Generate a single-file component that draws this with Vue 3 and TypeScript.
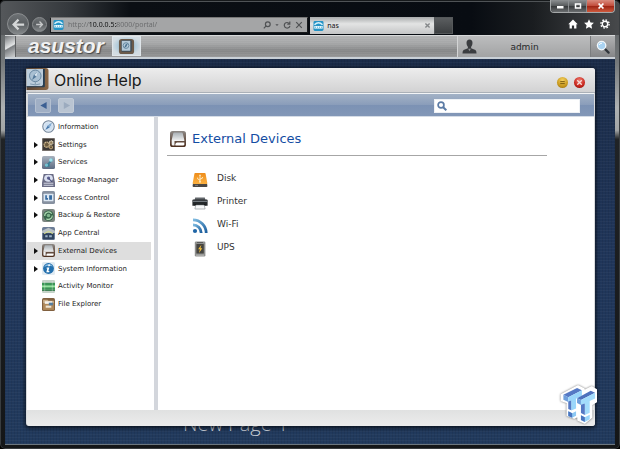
<script setup lang="ts">
import { ref } from 'vue'

interface Topic {
  label: string
  icon: string
  branch: boolean
}

const topics: Topic[] = [
  { label: 'Information', icon: 'compass', branch: false },
  { label: 'Settings', icon: 'settings', branch: true },
  { label: 'Services', icon: 'services', branch: true },
  { label: 'Storage Manager', icon: 'storage', branch: true },
  { label: 'Access Control', icon: 'access', branch: true },
  { label: 'Backup & Restore', icon: 'backup', branch: true },
  { label: 'App Central', icon: 'apps', branch: false },
  { label: 'External Devices', icon: 'external', branch: true },
  { label: 'System Information', icon: 'sysinfo', branch: true },
  { label: 'Activity Monitor', icon: 'activity', branch: false },
  { label: 'File Explorer', icon: 'files', branch: false },
]

const devices = [
  { label: 'Disk', icon: 'disk' },
  { label: 'Printer', icon: 'printer' },
  { label: 'Wi-Fi', icon: 'wifi' },
  { label: 'UPS', icon: 'ups' },
]

const selected = ref('External Devices')
const address = ref('http://10.0.0.5:8000/portal/')
const query = ref('')
</script>

<template>
  <div class="browser">
    <svg class="sprite" aria-hidden="true">
      <defs>
        <linearGradient id="g-tile" x1="0" y1="0" x2="0" y2="1">
          <stop offset="0" stop-color="#a9b2be" /><stop offset="1" stop-color="#5c6b82" />
        </linearGradient>
        <linearGradient id="g-brown" x1="0" y1="0" x2="0" y2="1">
          <stop offset="0" stop-color="#8d8986" /><stop offset=".5" stop-color="#6d5a4f" /><stop offset="1" stop-color="#4c2e1d" />
        </linearGradient>
        <linearGradient id="g-silver" x1="0" y1="0" x2="0" y2="1">
          <stop offset="0" stop-color="#a9b0b5" /><stop offset="1" stop-color="#e9ebec" />
        </linearGradient>
        <linearGradient id="g-orange" x1="0" y1="0" x2="0" y2="1">
          <stop offset="0" stop-color="#ee8d1b" /><stop offset="1" stop-color="#fbb040" />
        </linearGradient>
        <linearGradient id="g-wood" x1="0" y1="0" x2="1" y2="0">
          <stop offset="0" stop-color="#5a4433" /><stop offset="1" stop-color="#8a6746" />
        </linearGradient>
        <linearGradient id="g-wifi" x1="0" y1="0" x2="1" y2="1">
          <stop offset="0" stop-color="#7fbbe0" /><stop offset="1" stop-color="#1d5f9e" />
        </linearGradient>
      </defs>
      <symbol id="compass" viewBox="0 0 12 12">
        <circle cx="6" cy="6" r="5.3" fill="#e4edf6" stroke="#75879b" stroke-width="1" />
        <circle cx="6" cy="6" r="4" fill="#cfe0f1" />
        <path d="M9 2.8 6.9 6.9 3 9.2 5.2 5.2z" fill="#4577aa" /><path d="M9 2.8 5.2 5.2 6.9 6.9z" fill="#8bb0d4" />
      </symbol>
      <symbol id="settings" viewBox="0 0 12 12">
        <rect width="12" height="12" rx="1.5" fill="#3b3734" />
        <rect x=".5" y=".5" width="11" height="11" rx="1" fill="none" stroke="#77716c" />
        <circle cx="4.4" cy="6.2" r="2.4" fill="#6b5a3e" stroke="#cdb78d" stroke-width="1.3" stroke-dasharray="1.3 .5" />
        <circle cx="8.5" cy="4.3" r="1.6" fill="#8f7c58" stroke="#eadfc4" stroke-width="1.1" stroke-dasharray=".9 .4" />
        <circle cx="8.3" cy="8.6" r="1.4" fill="#5b4a30" stroke="#b59d72" stroke-width="1" />
      </symbol>
      <symbol id="services" viewBox="0 0 12 12">
        <rect width="12" height="12" rx="1.5" fill="url(#g-tile)" />
        <path d="M2.5 9.5 6 6l3-4 1.5 2L7 7v3H3z" fill="#387f96" />
        <circle cx="8.3" cy="3.7" r="1.7" fill="#9fe0ea" /><circle cx="4.1" cy="8.4" r="1.5" fill="#75c1d0" />
      </symbol>
      <symbol id="storage" viewBox="0 0 12 12">
        <path d="M1.5 0h9l1.5 8v4H0V8z" fill="#6b6d86" />
        <ellipse cx="6" cy="4" rx="4" ry="3.2" fill="#d9dff0" /><circle cx="6" cy="3.8" r="1.5" fill="#5d6191" />
        <path d="m6 4 3.2 3" stroke="#444b79" stroke-width="1" />
        <path d="M1.5 8.5h9M1.5 10.4h9" stroke="#d7d9e6" stroke-width=".9" />
      </symbol>
      <symbol id="access" viewBox="0 0 12 12">
        <rect width="12" height="12" rx="1.5" fill="#8791a0" />
        <rect x="1.5" y="2.5" width="9" height="7" rx=".6" fill="#dce7f2" />
        <path d="M3 4v4h2.5V6.4H4.5V4zM6.6 4h2.6v4H6.6z" fill="#356a9f" />
      </symbol>
      <symbol id="backup" viewBox="0 0 12 12">
        <rect width="12" height="12" rx="2" fill="#7b8580" />
        <circle cx="6" cy="6" r="4.8" fill="#37664a" />
        <path d="M2.5 6.4A3.5 3.5 0 0 1 9 4.4M9.5 6A3.5 3.5 0 0 1 4 8.9" fill="none" stroke="#a9d4ad" stroke-width="1.1" />
        <circle cx="6" cy="6" r="1.6" fill="#7fb58b" />
      </symbol>
      <symbol id="apps" viewBox="0 0 12 12">
        <rect width="12" height="12" rx="1.5" fill="#6c7d97" />
        <path d="M0 3.5 6 .8l6 2.7v2H0z" fill="#b9c1c6" /><path d="M1 5.8h10v5.4H1z" fill="#2f425e" />
        <path d="M2 6.2 6 4l4 2.2" stroke="#dbe27f" stroke-width=".9" fill="none" />
        <path d="M3 7.5h2.2v2H3zM6.6 7.5h2.5v2H6.6z" fill="#9cb4c9" />
      </symbol>
      <symbol id="external" viewBox="0 0 16 16">
        <rect width="16" height="16" rx="2.6" fill="url(#g-brown)" />
        <path d="M4.2 1.6h7.6q.8 0 1 .8L14.3 9H1.7l1.5-6.6q.2-.8 1-.8z" fill="url(#g-silver)" />
        <path d="M1.7 9h12.6v.9H4.5v4.7H3q-1.3 0-1.3-1.3z" fill="#f1f2f2" />
        <path d="M5.4 14.6v-1.4q.1-1.6 1.7-1.6h7.2v1.7q0 1.3-1.3 1.3z" fill="#fff" />
      </symbol>
      <symbol id="sysinfo" viewBox="0 0 12 12">
        <rect width="12" height="12" rx="1.5" fill="#e1ebf2" />
        <circle cx="6" cy="6" r="5" fill="#2370ae" /><path d="M2 4.5A4.4 4.4 0 0 1 10 4.2Q6 2.4 2 4.5z" fill="#88bce2" />
        <path d="M7.6 2.4 7 4H5.6l.5-1.6zM4.4 5h2.4L5.9 8.4h1L6.6 9.5H4L4.9 6h-.8z" fill="#fff" />
      </symbol>
      <symbol id="activity" viewBox="0 0 12 12">
        <rect width="12" height="12" rx="1.2" fill="#c4d2c8" />
        <path d="M0 2.6h12V9H0z" fill="#3b9556" /><path d="M0 5h12v1.8H0z" fill="#96e3a0" />
        <path d="M0 9h12v1H0z" fill="#277240" />
        <path d="M2.5 1v10M9.5 1v10" stroke="#eef5ef" stroke-width=".5" opacity=".6" />
      </symbol>
      <symbol id="files" viewBox="0 0 12 12">
        <rect width="12" height="12" rx="1.5" fill="#81603f" />
        <path d="M1 1.5h4l1 1h5V5H1z" fill="#cbb08a" /><path d="M2.6 3h6.8v3H2.6z" fill="#f6f3ec" />
        <path d="M1 5.4h10V11H1z" fill="#b08a5b" /><path d="M3.4 7h5.2v2H3.4z" fill="#eee5d3" />
        <path d="M6.3 4.3h3.8v2.5H6.3z" fill="#557d9d" />
      </symbol>
      <symbol id="disk" viewBox="0 0 16 16">
        <path d="M1 11h14l.4 3.1q0 .9-.9.9h-13q-.9 0-.9-.9z" fill="#4a4744" />
        <path d="M3.2 1h9.6q.6 0 .8.7l1.7 9.4q.1.8-.7.8H1.4q-.8 0-.7-.8L2.4 1.7Q2.6 1 3.2 1z" fill="url(#g-orange)" />
        <path d="M8 3.2v6.4M8 8.2 5.6 6.8V5.6M8 7.2l2.4-1V5" fill="none" stroke="#fff1cf" stroke-width=".9" />
        <path d="m8 2.2 1.1 1.6H6.9z" fill="#fff1cf" /><circle cx="8" cy="9.8" r=".9" fill="#fff1cf" />
        <path d="M3 13.4h3" stroke="#9a9794" stroke-width=".7" />
      </symbol>
      <symbol id="printer" viewBox="0 0 16 16">
        <path d="M3.2 2.4h9.6l.8 3H2.4z" fill="#62676b" /><path d="M1.4 4.6h13.2q1 0 1 1v5.2H.4V5.6q0-1 1-1z" fill="#24282b" />
        <path d="M.9 5.8h14.2v1.3H.9z" fill="#737a80" /><path d="M2.6 9.2h10.8v1.4H2.6z" fill="#0b0d0e" />
        <path d="M3.8 10h8.4l.9 4H2.9z" fill="#f7f8f9" stroke="#83898e" stroke-width=".6" />
      </symbol>
      <symbol id="wifi" viewBox="0 0 16 16">
        <g fill="none" stroke="url(#g-wifi)" stroke-width="2.8">
          <path d="M1 1.9A13.2 13.2 0 0 1 14.2 15" /><path d="M1 6.8A8.2 8.2 0 0 1 9.2 15" />
        </g>
        <circle cx="3" cy="13" r="2.1" fill="#1f65a6" />
      </symbol>
      <symbol id="ups" viewBox="0 0 16 16">
        <rect x="2.8" y=".6" width="10.6" height="14.8" rx="1.2" fill="#8f908e" />
        <rect x="4.4" y="3" width="7.4" height="9.6" rx=".6" fill="#45443f" />
        <path d="M5 1h6v1.1H5z" fill="#5b5c5b" /><path d="M9.4 3.7 6.1 8.3h1.8L7 12l3.3-4.7H8.5z" fill="#f4bf3a" />
        <path d="M4 14.2h8" stroke="#c7c8c6" stroke-width=".7" />
      </symbol>
      <symbol id="site" viewBox="0 0 10 10">
        <rect width="10" height="10" rx="1.4" fill="#2593c5" />
        <path d="M1 3.7Q5-.4 9 3.7" fill="none" stroke="#d5f1fb" stroke-width="1.5" />
        <path d="M.8 5h8.4v2.6H.8z" fill="#e9f8fd" /><path d="M2 5.6v1.4M4 5.6v1.4M6 5.6v1.4M8 5.6v1.4" stroke="#3fa1cb" stroke-width=".6" />
      </symbol>
      <symbol id="book" viewBox="0 0 24 24">
        <path d="M0 0h21q3 0 3 3v18q0 3-3 3H0z" fill="url(#g-wood)" />
        <path d="M0 1h18v17q0 2-2 2H0z" fill="#bccddb" /><path d="M18 1h2v19q0 1-1 1H0v-1h16q2 0 2-2z" fill="#253e54" />
        <circle cx="9.6" cy="8.6" r="6.3" fill="#a9c0d3" stroke="#63829d" stroke-width="1" />
        <path d="M13 3.8 10.8 9.6 6 13l2.2-5.8z" fill="#54799a" /><path d="M8.4 7.3 10.8 9.6 13 3.8z" fill="#d8e5ef" />
        <path d="M4 17.4q5.6 2 11 0M9.6 15v3" stroke="#7994aa" fill="none" />
      </symbol>
    </svg>

    <header class="chrome">
      <nav class="travel" aria-label="History">
        <button class="round back" aria-label="Back">
          <svg viewBox="0 0 16 16"><path d="M14 8H3M8 2.8 2.8 8 8 13.2" fill="none" stroke="#d5d7d8" stroke-width="2.4" /></svg>
        </button>
        <button class="round next" aria-label="Forward">
          <svg viewBox="0 0 16 16"><path d="M2 8h11M8 2.8 13.2 8 8 13.2" fill="none" stroke="#c6c8c9" stroke-width="2.4" /></svg>
        </button>
      </nav>
      <div class="address">
        <svg class="ico10"><use href="#site" /></svg>
        <input v-model="address" type="text" aria-label="Address" />
        <button aria-label="Search the web"><svg viewBox="0 0 10 10"><circle cx="6" cy="4" r="3" /><path d="M3.9 6.2 1 9.3" /></svg></button>
        <button class="tiny" aria-label="Show address list"><svg viewBox="0 0 10 10"><path class="solid" d="M1 3h8L5 7.5z" /></svg></button>
        <button aria-label="Refresh"><svg viewBox="0 0 10 10"><path d="M8 3.3A3.5 3.5 0 1 0 8.6 6M8.5.7v3.2H5.3" /></svg></button>
        <button aria-label="Stop"><svg viewBox="0 0 10 10"><path d="m1.5 1.5 7 7m0-7-7 7" /></svg></button>
      </div>
      <div class="tab">
        <svg class="ico10"><use href="#site" /></svg>
        <span>nas</span>
        <button aria-label="Close tab"><svg viewBox="0 0 10 10"><path d="m2 2 6 6m0-6-6 6" fill="none" stroke="#848789" stroke-width="2" /></svg></button>
      </div>
      <button class="newtab" aria-label="New tab"></button>
      <div class="right">
        <div class="window-buttons">
          <button aria-label="Minimize window"><svg viewBox="0 0 10 8"><path d="M2 4h6.5v2.5H2z" fill="#fff" /></svg></button>
          <button aria-label="Maximize window"><svg viewBox="0 0 10 8"><path d="M2.5 2h5v4h-5z" fill="none" stroke="#fff" stroke-width="1.5" /></svg></button>
          <button class="shut" aria-label="Close window"><svg viewBox="0 0 10 8"><path d="m2.6 1.5 4.8 5m0-5-4.8 5" stroke="#fff" stroke-width="1.8" /></svg></button>
        </div>
        <div class="tools">
          <button aria-label="Home"><svg viewBox="0 0 10 10"><path d="M5 .6.3 5.2h1.3v4.3h2.3V6.4h2.2v3.1h2.3V5.2h1.3z" fill="#fff" /></svg></button>
          <button aria-label="Favorites"><svg viewBox="0 0 10 10"><path d="m5 .2 1.5 3.2 3.4.4-2.5 2.4.7 3.5L5 8 1.9 9.7l.7-3.500L.1 3.8l3.400-.4z" fill="#fff" /></svg></button>
          <button aria-label="Tools"><svg viewBox="0 0 10 10"><circle cx="5" cy="5" r="2.7" fill="none" stroke="#fff" stroke-width="1.4" /><circle cx="5" cy="5" r="4.1" fill="none" stroke="#fff" stroke-width="1.4" stroke-dasharray="1.6 1.62" /></svg></button>
        </div>
      </div>
    </header>

    <div class="page">
      <header class="nasbar">
        <button class="desktop" aria-label="Show desktop"></button>
        <div class="logo">asustor</div>
        <button class="task" aria-label="Online Help window">
          <svg viewBox="0 0 18 18">
            <rect x="1" y="1" width="16" height="16" rx="3" fill="#6b5a4a" /><rect x="3.5" y="2.5" width="11" height="12" rx="1" fill="#3c4c58" />
            <rect x="4" y="3" width="9" height="10.5" fill="#b4c9d8" /><circle cx="8.5" cy="8" r="3" fill="none" stroke="#64879f" /><path d="M10.5 5.5 9 9l-2.5 1.5L8 7z" fill="#49718f" />
          </svg>
        </button>
        <button class="user">
          <svg viewBox="0 0 16 16"><path d="M8 .5q3.2 0 3.2 3.8 0 2.6-1.5 4.2v1.3l4.6 2q1.2.7 1.2 3.7H.5q0-3 1.2-3.7l4.6-2V8.5Q4.8 6.9 4.8 4.3 4.8.5 8 .5z" fill="#3b3d40" /><path d="M6.6 10.4 8 13l1.4-2.6" fill="#8f9294" /></svg>
          <span>admin</span>
        </button>
        <button class="find" aria-label="Search">
          <svg viewBox="0 0 14 14"><path d="m8.6 8.6 4 4" stroke="#30353b" stroke-width="2.2" stroke-linecap="round" /><circle cx="5.6" cy="5.6" r="4.2" fill="#a9d3f2" stroke="#f3f8fb" stroke-width="1.3" /><path d="M3.3 5A2.5 2.5 0 0 1 6 3.2" stroke="#fff" fill="none" /></svg>
        </button>
      </header>

      <div class="desk">
        <p class="page-name">New Page 1</p>
        <section class="dialog" aria-label="Online Help">
          <header class="title">
            <svg class="book"><use href="#book" /></svg>
            <h1>Online Help</h1>
            <button class="orb gold" aria-label="Minimize"><svg viewBox="0 0 10 10"><path d="M2.5 4h5M2.5 6.2h5" stroke="#735509" stroke-width="1" /></svg></button>
            <button class="orb red" aria-label="Close"><svg viewBox="0 0 10 10"><path d="m2.5 2.5 5 5m0-5-5 5" stroke="#f6dcd9" stroke-width="1.5" /></svg></button>
          </header>
          <div class="strip">
            <button class="step" aria-label="Previous topic"><svg viewBox="0 0 10 10"><path d="M8.5 1v8L1.5 5z" fill="#3b5f93" /></svg></button>
            <button class="step dim" aria-label="Next topic"><svg viewBox="0 0 10 10"><path d="M2 1v8l7-4z" fill="#9cabbf" /></svg></button>
            <label class="search">
              <svg viewBox="0 0 10 10"><circle cx="4" cy="4" r="2.9" fill="none" stroke="#5c7ba5" stroke-width="1.7" /><path d="M6.2 6.2 9.3 9.3" stroke="#5c7ba5" stroke-width="2" /></svg>
              <input v-model="query" type="search" aria-label="Search help" />
            </label>
          </div>
          <div class="body">
            <nav class="side" aria-label="Topics">
              <ul>
                <li v-for="t in topics" :key="t.label">
                  <button :class="{ on: selected === t.label }" @click="selected = t.label">
                    <svg class="arrow" viewBox="0 0 4 6"><path v-if="t.branch" d="M0 0v6l4-3z" fill="#111" /></svg>
                    <svg class="ico"><use :href="'#' + t.icon" /></svg>
                    <span>{{ t.label }}</span>
                  </button>
                </li>
              </ul>
            </nav>
            <main class="content">
              <h2><svg><use href="#external" /></svg>External Devices</h2>
              <ul class="devices">
                <li v-for="d in devices" :key="d.label">
                  <svg><use :href="'#' + d.icon" /></svg>
                  <a href="#" @click.prevent>{{ d.label }}</a>
                </li>
              </ul>
            </main>
          </div>
          <footer class="foot"></footer>
          <svg class="mark" viewBox="0 0 37 40" aria-hidden="true">
            <path d="M1 10 18 1l6 3v2l8-4 5 3v12l-5 3v13l-7 6-7-3v-4l-4 2-7-3V18l-6-2z" fill="#fff" stroke="#fff" stroke-width="1.5" stroke-linejoin="round" />
            <path d="M3 10 17 3l5 2.5-14 7z" fill="#5579c4" /><path d="m3 10 5 2.5v5L3 15z" fill="#6e9fdc" />
            <path d="m8 12.5 14-7V11l-6 3v10l-5 2.2V16l-3 1.5z" fill="#9ad6fa" />
            <path d="m8 17 3-1v10l-3-1.5z" fill="#5579c4" /><path d="m8 27 4 2 4-2v4.5l-4 2.2-4-2z" fill="#8dc9f4" /><path d="m8 27 4 2v4.7l-4-2z" fill="#4a75bf" />
            <path d="M17 13.5 31 6l4.500 2L21 15.500z" fill="#4e71bd" /><path d="m17 13.5 4 2v5l-4-2z" fill="#6e9fdc" />
            <path d="M21 15.5 35.500 8v5.800L30 16.500v12l-5 2.200V19l-4 1.500z" fill="#a3dcfc" />
            <path d="m21 20.3 4-1.300v11.700l-4-2z" fill="#5579c4" /><path d="m21 31 4 2 5-2.500V35l-5 3-4-2.200z" fill="#9ad6fa" /><path d="m21 31 4 2v5l-4-2.200z" fill="#4a75bf" />
          </svg>
        </section>
      </div>
    </div>
  </div>
</template>

<style>
body {
  margin: 0;
  background: #000;
}
</style>

<style scoped>
* {
  box-sizing: border-box;
}
button {
  padding: 0;
  border: 0;
  background: none;
  color: inherit;
  font: inherit;
}
svg {
  display: block;
  flex: none;
}
ul,
p,
h1,
h2 {
  margin: 0;
  padding: 0;
  list-style: none;
  font-weight: 400;
}
.sprite {
  position: absolute;
  width: 0;
  height: 0;
}
.browser {
  display: flex;
  flex-direction: column;
  height: 100vh;
  padding: 0 5px 4px;
  overflow: hidden;
  border-radius: 5px;
  background:
    linear-gradient(90deg, #55585b 0, #35393d 11%, #0b0f14 21%, #080c12 76%, #1a1d20 86%, #484a4c 100%) top / 100% 35px no-repeat,
    linear-gradient(180deg, #55585b 0, #75797b 14%, #aeb1b2 24%, #a2a5a6 29%, #202326 31%, #141618 100%);
  box-shadow: inset 0 1px 0 #16191b, inset 0 2px 0 #4f5356, inset 0 0 0 1px #383c3f;
  font-family: "DejaVu Sans", sans-serif;
}
.chrome {
  display: flex;
  flex: none;
  height: 35px;
}
.travel {
  display: flex;
  align-items: center;
  flex: none;
  gap: 3px;
  width: 45px;
  padding: 13px 0 0 2px;
}
.round {
  display: grid;
  place-items: center;
  flex: none;
  border: 1px solid #8b8e90;
  border-radius: 50%;
  background: linear-gradient(#6c7073, #5b5f62 50%, #85898b);
}
.back {
  width: 22px;
  height: 22px;
}
.back svg {
  width: 15px;
  height: 15px;
}
.next {
  width: 15px;
  height: 15px;
}
.next svg {
  width: 9px;
  height: 9px;
}
.address {
  display: flex;
  align-items: center;
  gap: 4px;
  flex: 255 0 0;
  height: 16px;
  margin-top: 17px;
  padding: 0 4px 0 2px;
  border: 1px solid #17191b;
  border-top-color: #777;
  background: #a4a5a6;
  color: #505254;
}
.ico10 {
  width: 11px;
  height: 10px;
}
.address input {
  flex: 1;
  min-width: 0;
  height: 12px;
  padding: 0;
  border: 0;
  outline: 0;
  background: linear-gradient(90deg, #68696b 21px, #101112 21px, #101112 49px, #68696b 49px);
  background-clip: text;
  -webkit-background-clip: text;
  color: transparent;
  font: 7px/12px "Noto Sans", sans-serif;
}
.address button {
  width: 8px;
}
.address .tiny {
  width: 4px;
}
.address button svg {
  width: 100%;
  fill: none;
  stroke: #505254;
  stroke-width: 1.5px;
}
.address .solid {
  fill: #505254;
  stroke: none;
}
.tab {
  display: flex;
  align-items: center;
  gap: 3px;
  flex: 120 0 0;
  height: 17px;
  margin: 17px 0 0 2px;
  padding: 0 3px;
  background: linear-gradient(#a9abac, #e3e4e4 40%, #c4c5c6);
  color: #111;
  font: 7px/12px "Noto Sans", sans-serif;
}
.tab span {
  flex: 1;
}
.tab button,
.tab button svg {
  width: 7px;
}
.newtab {
  width: 19px;
  height: 17px;
  margin-top: 17px;
  border: 1px solid #55585a;
  background: linear-gradient(#5b5e60, #3c3f41);
}
.right {
  display: flex;
  flex-direction: column;
  flex: 165 0 0;
  align-items: flex-end;
  gap: 6px;
}
.window-buttons {
  display: flex;
  height: 13px;
  overflow: hidden;
  border: 1px solid #a5a8a9;
  border-top: 0;
  border-radius: 0 0 4px 4px;
}
.window-buttons button {
  display: grid;
  place-items: center;
  width: 18px;
  border-right: 1px solid #8b8e90;
  background: linear-gradient(#8d9092, #55585a 50%, #37393b 51%, #6b6e70);
}
.window-buttons svg {
  width: 10px;
  height: 8px;
}
.window-buttons .shut {
  width: 27px;
  border: 0;
  background: linear-gradient(#d98b7d, #c14a38 50%, #9c2313 51%, #cf5a3d);
}
.tools {
  display: flex;
  gap: 6px;
  padding-right: 5px;
}
.tools button,
.tools svg {
  width: 10px;
  height: 10px;
}
.page {
  display: flex;
  flex: 1;
  flex-direction: column;
  min-height: 0;
  overflow: hidden;
  border: solid #6c767e;
  border-width: 0 0 1px;
}
.nasbar {
  display: flex;
  flex: none;
  height: 24px;
  border-top: 1px solid #d7d9da;
  border-bottom: 2px solid #c9d0d7;
  background: repeating-linear-gradient(0deg, #ffffff0d 0 1px, #0000 1px 2px), linear-gradient(#b1b2b3, #a5a6a7 35%, #858687 70%, #949596);
}
.desktop {
  width: 11px;
  border-right: 1px solid #5d5f61;
  background: linear-gradient(150deg, #74777a, #e2e4e5 50%, #7c7f82 55%, #cfd1d2);
}
.logo {
  padding: 0 8px 0 12px;
  color: #f1f2f3;
  font: italic 700 21px/19px "Liberation Sans", sans-serif;
  text-shadow: 1px 1px 1px #45484b;
}
.task {
  display: grid;
  place-items: center;
  width: 29px;
  height: 20px;
  border: 1px solid #dfe5e9;
  background: radial-gradient(#7cb1cf, #d3dce2 75%);
}
.task svg {
  width: 17px;
  height: 17px;
}
.user {
  display: flex;
  align-items: center;
  width: 133px;
  margin-left: auto;
  padding-left: 4px;
  border-left: 1px solid #d3d4d5;
  background: linear-gradient(#bcbdbe, #a2a3a4);
  color: #26282a;
  font: 9px/20px "DejaVu Sans", sans-serif;
}
.user svg {
  width: 15px;
  height: 15px;
}
.user span {
  flex: 1;
  padding-right: 18px;
  text-align: center;
}
.find {
  display: grid;
  place-items: center;
  width: 25px;
  border-left: 1px solid #7b7d7f;
  background: linear-gradient(#b1b2b3, #858688);
}
.find svg {
  width: 14px;
  height: 14px;
}
.desk {
  position: relative;
  display: flex;
  flex: 1;
  min-height: 0;
  padding: 9px 20px 18px 21px;
  background:
    repeating-linear-gradient(0deg, #ffffff08 0 1px, #0000 1px 3px),
    repeating-linear-gradient(90deg, #00000012 0 1px, #0000 1px 3px),
    linear-gradient(#1b2c49, #20365a 50%, #213a5d);
}
.page-name {
  position: absolute;
  bottom: 8px;
  left: 178px;
  color: #c9d0d9;
  font: 300 20px/24px "Open Sans", sans-serif;
}
.dialog {
  position: relative;
  display: flex;
  flex: 1;
  flex-direction: column;
  border-radius: 3px;
  background: #d9dbdd;
  box-shadow: 0 1px 4px 1px #000a;
}
.title {
  display: flex;
  align-items: center;
  flex: none;
  height: 25px;
  padding-right: 10px;
  border-bottom: 1px solid #aab0b7;
  border-radius: 3px 3px 0 0;
  background: linear-gradient(#ededed, #d2d2d3);
}
.book {
  align-self: flex-start;
  width: 23px;
  height: 22px;
}
.title h1 {
  flex: 1;
  padding-left: 5px;
  color: #1a1a1a;
  font: 16px/24px Inter, sans-serif;
}
.orb {
  display: grid;
  place-items: center;
  width: 11px;
  height: 11px;
  margin-top: 4px;
  border-radius: 50%;
}
.orb svg {
  width: 9px;
  height: 9px;
}
.gold {
  margin-right: 6px;
  background: radial-gradient(circle at 50% 30%, #f4d05f, #c99a1f 60%, #8d6611);
}
.red {
  background: radial-gradient(circle at 50% 30%, #ee7b70, #c8261d 60%, #7f120d);
}
.strip {
  display: flex;
  align-items: center;
  flex: none;
  gap: 7px;
  height: 24px;
  margin: 0 1px 0 2px;
  padding: 1px 14px 0 7px;
  border-top: 1px solid #f2f4f6;
  border-bottom: 1px solid #d5dce6;
  background: linear-gradient(#a3b2c6, #8a9dba 49%, #7c92b4 50%, #8297b7);
}
.step {
  display: grid;
  place-items: center;
  width: 16px;
  height: 15px;
  border: 1px solid #b4c0d1;
  border-radius: 2px;
  background: #a0afc5;
}
.step svg {
  width: 9px;
  height: 9px;
}
.dim {
  border-color: #c3ccd8;
  background: #b9c4d2;
}
.search {
  display: flex;
  align-items: center;
  gap: 2px;
  width: 146px;
  height: 14px;
  margin-left: auto;
  padding-left: 2px;
  border: 1px solid #eef1f5;
  background: #fff;
}
.search svg {
  width: 10px;
  height: 10px;
}
.search input {
  flex: 1;
  min-width: 0;
  height: 12px;
  padding: 0;
  border: 0;
  outline: 0;
  background: none;
  font: 8px/12px "DejaVu Sans", sans-serif;
}
.body {
  display: flex;
  flex: 1;
  min-height: 0;
  margin: 0 1px;
  background: #fff;
}
.side {
  width: 131px;
  border-right: 4px solid #d3d6dc;
}
.side ul {
  display: grid;
  grid-template-rows: repeat(11, 1fr);
  height: 195px;
  margin-top: 1px;
}
.side li {
  display: flex;
}
.side button {
  display: flex;
  align-items: center;
  flex: 1;
  margin-right: 3px;
  padding-left: 7px;
  color: #1c1c1c;
  font-size: 7px;
  line-height: 12px;
}
.side .on {
  background: #dedede;
}
.arrow {
  width: 4px;
  height: 6px;
  margin-right: 4px;
}
.ico {
  width: 13px;
  height: 13px;
  margin-right: 3px;
}
.content {
  flex: 1;
  padding: 10px 47px 0 9px;
}
.content h2 {
  display: flex;
  align-items: center;
  gap: 6px;
  height: 29px;
  padding: 0 0 4px 3px;
  border-bottom: 1px solid #a6a6a6;
  color: #134da3;
  font-size: 13px;
  line-height: 20px;
}
.content h2 svg {
  width: 16px;
  height: 16px;
}
.devices {
  display: grid;
  grid-auto-rows: 23px;
  padding: 12px 0 0 25px;
}
.devices li {
  display: flex;
  align-items: center;
  gap: 9px;
}
.devices svg {
  width: 16px;
  height: 16px;
}
.devices a {
  padding-bottom: 3px;
  color: #333;
  font-size: 9px;
  line-height: 14px;
  text-decoration: none;
}
.foot {
  flex: none;
  height: 16px;
  margin-left: 1px;
  border-radius: 0 0 3px 3px;
  background: linear-gradient(#e0e1e1, #ececec);
}
.mark {
  position: absolute;
  right: -2px;
  bottom: 2px;
  width: 37px;
  height: 39px;
  filter: drop-shadow(0 0 1px #0008);
}
</style>
